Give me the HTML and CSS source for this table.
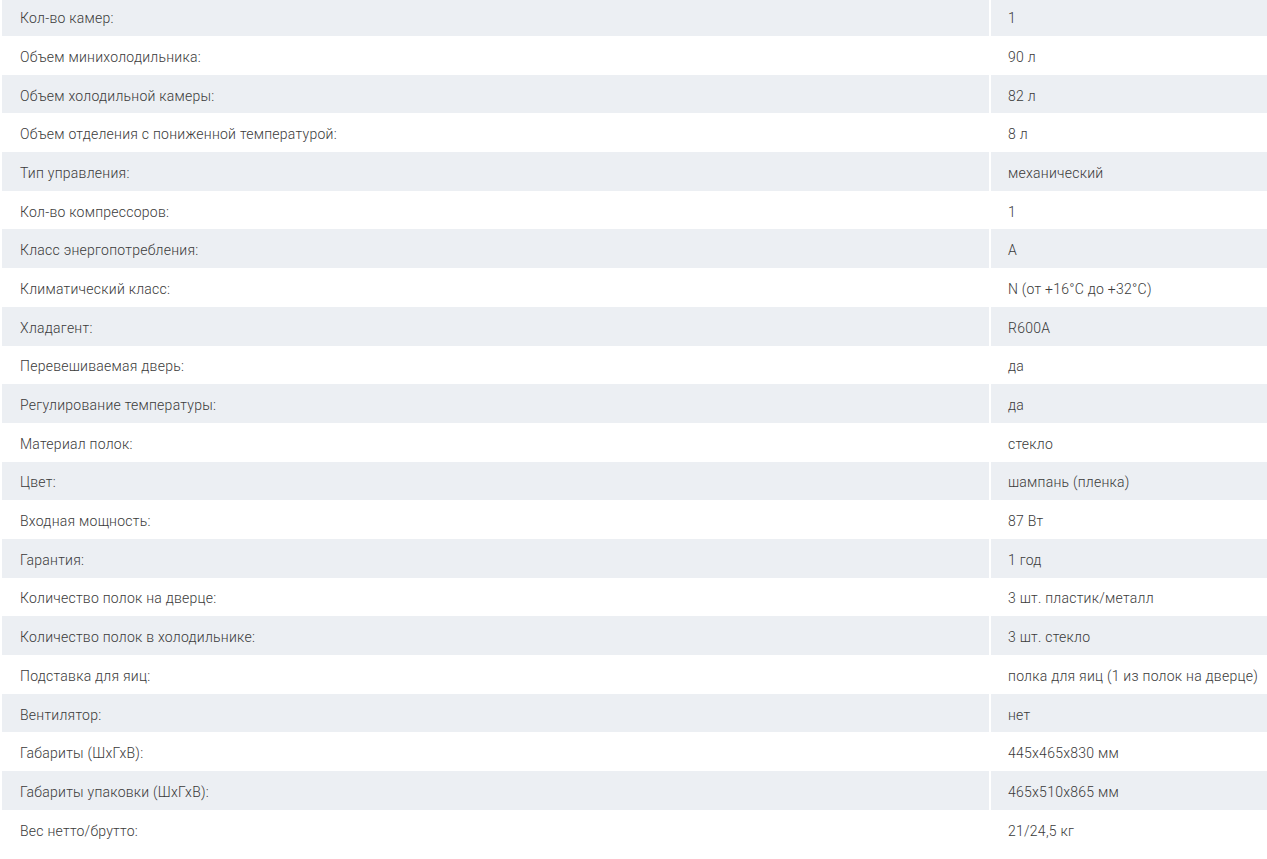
FILE: index.html
```html
<!DOCTYPE html>
<html lang="ru">
<head>
<meta charset="utf-8">
<title>Характеристики</title>
<link rel="stylesheet" href="styles.css">
</head>
<body>
<table class="specs">
  <tbody>
    <tr><td class="name">Кол-во камер:</td><td class="val">1</td></tr>
    <tr><td class="name">Объем минихолодильника:</td><td class="val">90 л</td></tr>
    <tr><td class="name">Объем холодильной камеры:</td><td class="val">82 л</td></tr>
    <tr><td class="name">Объем отделения с пониженной температурой:</td><td class="val">8 л</td></tr>
    <tr><td class="name">Тип управления:</td><td class="val">механический</td></tr>
    <tr><td class="name">Кол-во компрессоров:</td><td class="val">1</td></tr>
    <tr><td class="name">Класс энергопотребления:</td><td class="val">A</td></tr>
    <tr><td class="name">Климатический класс:</td><td class="val">N (от +16°С до +32°С)</td></tr>
    <tr><td class="name">Хладагент:</td><td class="val">R600A</td></tr>
    <tr><td class="name">Перевешиваемая дверь:</td><td class="val">да</td></tr>
    <tr><td class="name">Регулирование температуры:</td><td class="val">да</td></tr>
    <tr><td class="name">Материал полок:</td><td class="val">стекло</td></tr>
    <tr><td class="name">Цвет:</td><td class="val">шампань (пленка)</td></tr>
    <tr><td class="name">Входная мощность:</td><td class="val">87 Вт</td></tr>
    <tr><td class="name">Гарантия:</td><td class="val">1 год</td></tr>
    <tr><td class="name">Количество полок на дверце:</td><td class="val">3 шт. пластик/металл</td></tr>
    <tr><td class="name">Количество полок в холодильнике:</td><td class="val">3 шт. стекло</td></tr>
    <tr><td class="name">Подставка для яиц:</td><td class="val">полка для яиц (1 из полок на дверце)</td></tr>
    <tr><td class="name">Вентилятор:</td><td class="val">нет</td></tr>
    <tr><td class="name">Габариты (ШхГхВ):</td><td class="val">445x465x830 мм</td></tr>
    <tr><td class="name">Габариты упаковки (ШхГхВ):</td><td class="val">465x510x865 мм</td></tr>
    <tr><td class="name">Вес нетто/брутто:</td><td class="val">21/24,5 кг</td></tr>
  </tbody>
</table>
</body>
</html>
```

FILE: styles.css
```css
html {
  overflow: hidden;
}
body {
  margin: 0;
  background: #ffffff;
  font-family: Roboto, "Noto Sans", "Liberation Sans", sans-serif;
  font-weight: 300;
  font-size: 14px;
  letter-spacing: 0.25px;
  color: #3a3a3a;
}
.specs {
  border-collapse: separate;
  border-spacing: 2px 0;
  margin-top: -2.7px;
  width: 1283px;
  table-layout: fixed;
}
.specs td {
  height: 38.7px;
  padding: 3px 0 0 18px;
  box-sizing: border-box;
  vertical-align: middle;
  white-space: nowrap;
}
.specs td.name {
  width: 987px;
}
.specs td.val {
  padding-left: 17px;
}
.specs tr:nth-child(odd) td {
  background: #eceff3;
}
```
